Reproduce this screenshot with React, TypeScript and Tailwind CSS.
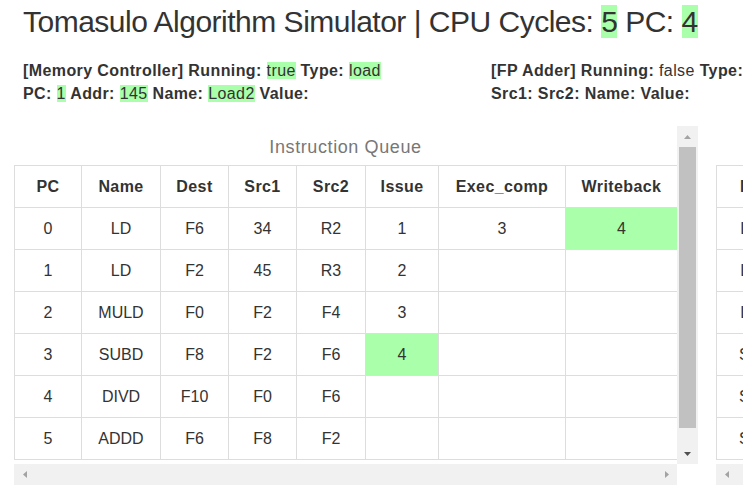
import React from "react";

const queueCols = [
  { key: "pc", label: "PC", w: "w-[67px]" },
  { key: "name", label: "Name", w: "w-[79px]" },
  { key: "dest", label: "Dest", w: "w-[68px]" },
  { key: "src1", label: "Src1", w: "w-[68px]" },
  { key: "src2", label: "Src2", w: "w-[69px]" },
  { key: "issue", label: "Issue", w: "w-[73px]" },
  { key: "exec", label: "Exec_comp", w: "w-[127px]" },
  { key: "wb", label: "Writeback", w: "w-[112px]" },
];

type Row = Record<string, string>;

const queue: Row[] = [
  { pc: "0", name: "LD", dest: "F6", src1: "34", src2: "R2", issue: "1", exec: "3", wb: "4" },
  { pc: "1", name: "LD", dest: "F2", src1: "45", src2: "R3", issue: "2", exec: "", wb: "" },
  { pc: "2", name: "MULD", dest: "F0", src1: "F2", src2: "F4", issue: "3", exec: "", wb: "" },
  { pc: "3", name: "SUBD", dest: "F8", src1: "F2", src2: "F6", issue: "4", exec: "", wb: "" },
  { pc: "4", name: "DIVD", dest: "F10", src1: "F0", src2: "F6", issue: "", exec: "", wb: "" },
  { pc: "5", name: "ADDD", dest: "F6", src1: "F8", src2: "F2", issue: "", exec: "", wb: "" },
];

// cells that just changed this cycle
const fresh: Record<string, boolean> = { "0-wb": true, "3-issue": true };

const buffers = ["Load1", "Load2", "Load3", "Store1", "Store2", "Store3"];

function Hl({ children }: { children: React.ReactNode }) {
  return <span className="bg-[#aaffaa] font-normal">{children}</span>;
}

function Arrow({ dir, dark }: { dir: "up" | "down" | "left" | "right"; dark?: boolean }) {
  const pts = {
    up: "0,4 3.5,0 7,4",
    down: "0,0 7,0 3.5,4",
    left: "4,0 4,7 0,3.5",
    right: "0,0 0,7 4,3.5",
  }[dir];
  const vert = dir === "up" || dir === "down";
  return (
    <svg width={vert ? 7 : 4} height={vert ? 4 : 7} viewBox={vert ? "0 0 7 4" : "0 0 4 7"}>
      <polygon points={pts} fill={dark ? "#505050" : "#a3a3a3"} />
    </svg>
  );
}

function ScrollPanel({ children, width, vbar }: { children: React.ReactNode; width: number; vbar?: boolean }) {
  return (
    <div className="flex flex-col shrink-0">
      <div className="flex">
        <div className="h-[338px] overflow-hidden bg-white" style={{ width }}>
          {children}
        </div>
        {vbar && (
          <div className="w-[21px] h-[338px] bg-[#f1f1f1] flex flex-col items-center">
            <div className="h-[21px] flex items-center justify-center">
              <Arrow dir="up" />
            </div>
            <div className="w-[17px] h-[281px] bg-[#c1c1c1]" />
            <div className="flex-1 flex items-end justify-center pb-[8px]">
              <Arrow dir="down" dark />
            </div>
          </div>
        )}
      </div>
      <div className="h-[21px] bg-[#f1f1f1] flex items-center justify-between pl-[9px] pr-[8px]" style={{ width }}>
        <Arrow dir="left" />
        <Arrow dir="right" />
      </div>
    </div>
  );
}

export default function App() {
  return (
    <div className="w-[743px] h-[499px] overflow-hidden bg-white text-[#333] font-['Liberation_Sans',Arial,sans-serif]">
      {/* header */}
      <h2 className="pl-[23px] pt-[5px] text-[30px] leading-[33px] tracking-[-0.5px] font-normal whitespace-nowrap">
        Tomasulo Algorithm Simulator | CPU Cycles: <Hl>5</Hl> PC: <Hl>4</Hl>
      </h2>

      {/* unit status */}
      <div className="flex mt-[21px] text-[16px] leading-[23px] tracking-[0.4px] font-bold whitespace-nowrap">
        <div className="w-[468px] pl-[23px] shrink-0">
          <div>
            [Memory Controller] Running: <Hl>true</Hl> Type: <Hl>load</Hl>
          </div>
          <div>
            PC: <Hl>1</Hl> Addr: <Hl>145</Hl> Name: <Hl>Load2</Hl> Value:
          </div>
        </div>
        <div className="pl-[23px] shrink-0">
          <div>
            [FP Adder] Running: <span className="font-normal">false</span> Type:
          </div>
          <div>Src1: Src2: Name: Value:</div>
        </div>
      </div>

      {/* tables */}
      <div className="flex gap-[18px] pl-[14px] mt-[21px]">
        <ScrollPanel width={663} vbar>
          <div className="h-[39px] pt-[8px] text-center text-[18px] leading-[26px] tracking-[0.6px] text-[#777]">
            Instruction Queue
          </div>
          <table className="table-fixed border-collapse w-[663px] text-[16px] text-center">
            <colgroup>
              {queueCols.map((c) => (
                <col key={c.key} className={c.w} />
              ))}
            </colgroup>
            <thead>
              <tr className="h-[42px]">
                {queueCols.map((c) => (
                  <th key={c.key} className="border border-[#ddd] p-0 font-bold tracking-[0.4px]">
                    {c.label}
                  </th>
                ))}
              </tr>
            </thead>
            <tbody>
              {queue.map((r, i) => (
                <tr key={i} className="h-[42px]">
                  {queueCols.map((c) => (
                    <td key={c.key} className={`border border-[#ddd] p-0 ${fresh[`${i}-${c.key}`] ? "bg-[#aaffaa]" : ""}`}>
                      {r[c.key]}
                    </td>
                  ))}
                </tr>
              ))}
            </tbody>
          </table>
        </ScrollPanel>

        <ScrollPanel width={300}>
          <div className="h-[39px] pt-[8px] text-center text-[18px] leading-[26px] tracking-[0.6px] text-[#777]">
            Load/Store Buffers
          </div>
          <table className="table-fixed border-collapse w-[300px] text-[16px] text-center">
            <colgroup>
              <col className="w-[92px]" />
              <col className="w-[104px]" />
              <col className="w-[104px]" />
            </colgroup>
            <thead>
              <tr className="h-[42px]">
                <th className="border border-[#ddd] p-0 tracking-[0.4px]">Name</th>
                <th className="border border-[#ddd] p-0 tracking-[0.4px]">Busy</th>
                <th className="border border-[#ddd] p-0 tracking-[0.4px]">Addr</th>
              </tr>
            </thead>
            <tbody>
              {buffers.map((b) => (
                <tr key={b} className="h-[42px]">
                  <td className="border border-[#ddd] p-0">{b}</td>
                  <td className="border border-[#ddd] p-0">false</td>
                  <td className="border border-[#ddd] p-0"></td>
                </tr>
              ))}
            </tbody>
          </table>
        </ScrollPanel>
      </div>
    </div>
  );
}
